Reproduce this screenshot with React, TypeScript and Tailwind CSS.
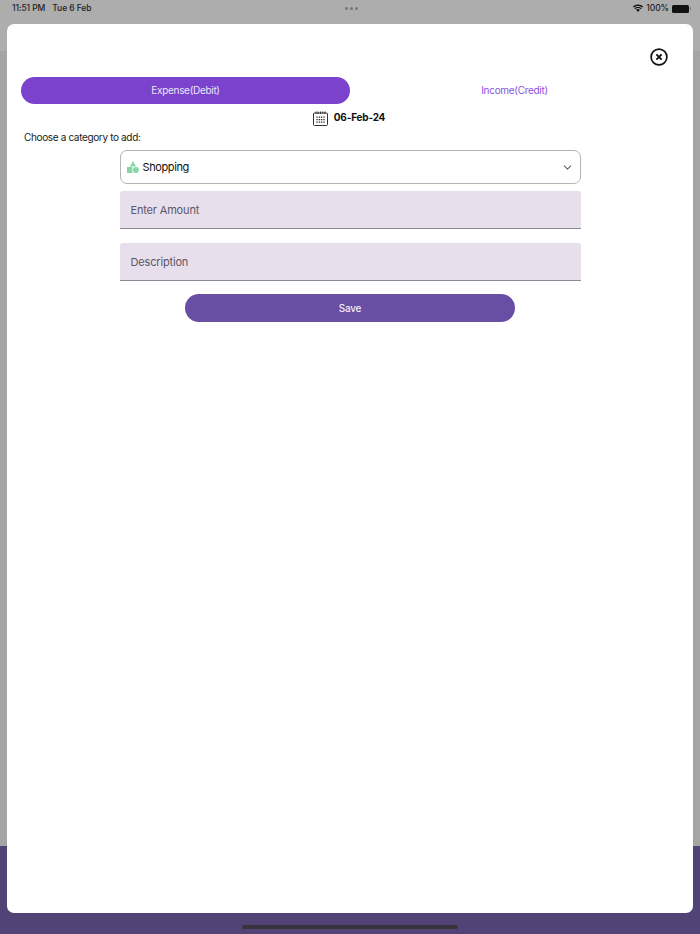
import React from "react";
import { ChevronDown } from "lucide-react";

const Wifi = () => (
  <svg width="12" height="9" viewBox="0 0 12 9" fill="#111" className="mr-[-1px]">
    <path d="M6 1.9c1.7 0 3.2.6 4.3 1.7l.8-.9C9.8 1.4 8 .6 6 .6S2.2 1.4.9 2.7l.8.9C2.8 2.5 4.3 1.9 6 1.9z" />
    <path d="M6 4.1c1.1 0 2 .4 2.8 1.1l.8-.9C8.6 3.4 7.4 2.9 6 2.9s-2.6.5-3.6 1.4l.8.9C4 4.5 4.9 4.1 6 4.1z" />
    <path d="M6 5.1c-.8 0-1.4.3-1.9.7L6 8l1.9-2.2c-.5-.4-1.1-.7-1.9-.7z" />
  </svg>
);

const Battery = () => (
  <div className="flex items-center gap-[1px]">
    <div className="w-[17px] h-[8px] rounded-[1.5px] bg-[#111]" />
    <div className="w-[1px] h-[3px] bg-[#777]" />
  </div>
);

const CalendarIcon = () => (
  <svg width="15" height="15" viewBox="0 0 15 15" fill="none" stroke="#333" strokeWidth="1">
    <rect x="0.5" y="2" width="14" height="12.5" rx="1" />
    <path d="M3 0.5v2.5M5.2 0.5v2.5M7.5 0.5v2.5M9.8 0.5v2.5M12 0.5v2.5" />
    <path
      d="M4 5.5v1.2M6.4 5.5v1.2M8.6 5.5v1.2M11 5.5v1.2M4 8v1.2M6.4 8v1.2M8.6 8v1.2M11 8v1.2M4 10.5v1.2M6.4 10.5v1.2M8.6 10.5v1.2M11 10.5v1.2"
      strokeWidth="1.4"
    />
  </svg>
);

const CloseIcon = () => (
  <svg width="18" height="18" viewBox="0 0 18 18" fill="none" stroke="#111">
    <circle cx="9" cy="9" r="7.9" strokeWidth="1.7" />
    <path d="M6.4 6.4l5.2 5.2M11.6 6.4l-5.2 5.2" strokeWidth="2" />
  </svg>
);

const ShapesIcon = () => (
  <svg width="12" height="12" viewBox="0 0 12 12" fill="#86d5a4">
    <path d="M6 0L9 5.4H3z" />
    <rect x="0" y="6" width="5.4" height="6" />
    <circle cx="8.9" cy="9" r="2.9" />
  </svg>
);

const Field = ({ label }: { label: string }) => (
  <div className="flex items-center w-[461px] h-[38px] px-[11px] pt-[1px] bg-[#e7dfec] rounded-t-[3px] border-b border-[#8f8896]">
    <span className="text-[11px] tracking-[-0.17px] text-[#5d5766]">{label}</span>
  </div>
);

export default function App() {
  return (
    <div className="relative w-[700px] h-[934px] overflow-hidden bg-[#a5a5a5] font-['Inter',sans-serif]">
      {/* dimmed page behind the sheet */}
      <div className="flex flex-col h-full">
        <div className="h-[52px] bg-[#adadad] border-b border-[#a3a3a3]" />
        <div className="flex-1" />
        <div className="h-[88px] bg-[#524376]" />
      </div>

      {/* status bar */}
      <div className="absolute top-0 left-0 right-0 h-[17px] grid grid-cols-3 items-center pl-[12px] pr-[9px] text-[8.5px] tracking-[-0.08px] font-medium text-[#222]">
        <div className="flex gap-[7px]">
          <span>11:51 PM</span>
          <span>Tue 6 Feb</span>
        </div>
        <div className="flex gap-[2px] justify-center">
          <div className="w-[3px] h-[3px] rounded-full bg-[#777]" />
          <div className="w-[3px] h-[3px] rounded-full bg-[#777]" />
          <div className="w-[3px] h-[3px] rounded-full bg-[#777]" />
        </div>
        <div className="flex items-center justify-end gap-[3px]">
          <Wifi />
          <span>100%</span>
          <Battery />
        </div>
      </div>

      {/* modal sheet */}
      <div className="absolute top-[24px] left-[7px] right-[7px] bottom-[21px] bg-white rounded-[7px] px-[14px] flex flex-col">
        <div className="flex justify-end h-[53px] pt-[24px] pr-[11px]">
          <CloseIcon />
        </div>

        {/* Tabs */}
        <div className="flex h-[27px] text-[10px] tracking-[-0.3px]">
          <div className="flex-1 flex items-center justify-center rounded-full bg-[#7b43cd] text-[#ece4f8]">
            Expense(Debit)
          </div>
          <div className="flex-1 flex items-center justify-center text-[#8a53dc]">
            Income(Credit)
          </div>
        </div>

        {/* Date */}
        <div className="flex items-center justify-center gap-[6px] h-[26px] mt-[1px] pr-[2px]">
          <CalendarIcon />
          <span className="text-[10px] tracking-[-0.2px] font-bold text-[#111] mb-[2px]">06-Feb-24</span>
        </div>

        <div className="pl-[3px] h-[12px] text-[10px] tracking-[-0.35px] leading-[12px] text-[#222]">
          Choose a category to add:
        </div>

        <div className="flex flex-col items-center mt-[7px]">
          <div className="flex items-center justify-between w-[461px] h-[34px] pl-[6px] pr-[6px] rounded-[7px] border border-[#b5b4b8] bg-white">
            <div className="flex items-center gap-[4px]">
              <ShapesIcon />
              <span className="text-[11px] tracking-[-0.4px] pt-[1px] text-[#111]">Shopping</span>
            </div>
            <ChevronDown size={13} color="#666" strokeWidth={2} />
          </div>

          <div className="mt-[7px]">
            <Field label="Enter Amount" />
          </div>
          <div className="mt-[14px]">
            <Field label="Description" />
          </div>

          <div className="flex items-center justify-center mt-[13px] pt-[1px] w-[330px] h-[28px] rounded-full bg-[#684fa3] text-[10px] tracking-[-0.25px] font-medium text-[#f1ecf8]">
            Save
          </div>
        </div>
      </div>

      {/* home indicator */}
      <div className="absolute bottom-[5px] left-[242px] w-[216px] h-[4px] rounded-full bg-[#37343d]" />
    </div>
  );
}
